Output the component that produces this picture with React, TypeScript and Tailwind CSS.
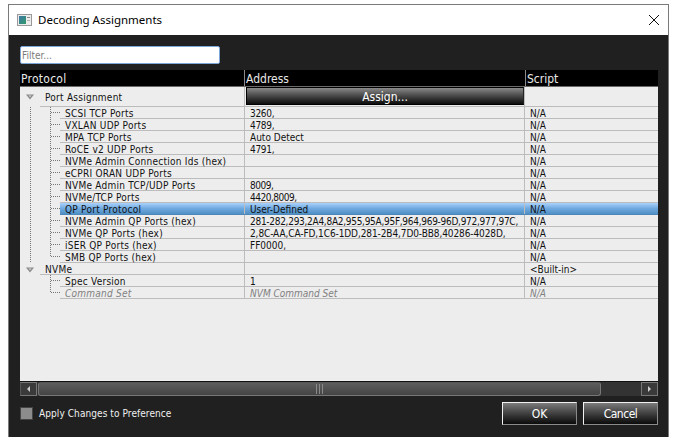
const font = "font-['DejaVu_Sans_Condensed','DejaVu_Sans',sans-serif]";

type Row = { name: string; address: string; script: string; top?: boolean; last?: boolean; open?: boolean; selected?: boolean; disabled?: boolean; tight?: string };

const rows: Row[] = [
  { name: 'SCSI TCP Ports', address: '3260,', script: 'N/A', open: true, tight: 'tracking-[-0.3px]' },
  { name: 'VXLAN UDP Ports', address: '4789,', script: 'N/A', open: true, tight: 'tracking-[-0.3px]' },
  { name: 'MPA TCP Ports', address: 'Auto Detect', script: 'N/A', open: true },
  { name: 'RoCE v2 UDP Ports', address: '4791,', script: 'N/A', open: true, tight: 'tracking-[-0.3px]' },
  { name: 'NVMe Admin Connection Ids (hex)', address: '', script: 'N/A', open: true },
  { name: 'eCPRI ORAN UDP Ports', address: '', script: 'N/A', open: true },
  { name: 'NVMe Admin TCP/UDP Ports', address: '8009,', script: 'N/A', open: true, tight: 'tracking-[-0.5px]' },
  { name: 'NVMe/TCP Ports', address: '4420,8009,', script: 'N/A', open: true, tight: 'tracking-[-0.5px]' },
  { name: 'QP Port Protocol', address: 'User-Defined', script: 'N/A', open: true, selected: true },
  { name: 'NVMe Admin QP Ports (hex)', address: '281-282,293,2A4,8A2,955,95A,95F,964,969-96D,972,977,97C,', script: 'N/A', open: true, tight: 'tracking-[-0.28px]' },
  { name: 'NVMe QP Ports (hex)', address: '2,8C-AA,CA-FD,1C6-1DD,281-2B4,7D0-BB8,40286-4028D,', script: 'N/A', open: true, tight: 'tracking-[-0.1px]' },
  { name: 'iSER QP Ports (hex)', address: 'FF0000,', script: 'N/A', open: true },
  { name: 'SMB QP Ports (hex)', address: '', script: 'N/A', open: true, last: true },
  { name: 'NVMe', address: '', script: '<Built-in>', top: true },
  { name: 'Spec Version', address: '1', script: 'N/A' },
  { name: 'Command Set', address: 'NVM Command Set', script: 'N/A', last: true, disabled: true },
];

const Triangle = () => (
  <svg width="8" height="6" viewBox="0 0 8 6" className="shrink-0">
    <path d="M0 0.5H8L4 5.5Z" fill="#8a8a8a" />
    <path d="M2.5 1.5H5.5L4 3.2Z" fill="#d8d8d8" />
  </svg>
);

// dotted tree guides in the 40px gutter left of a child row
const Guides = ({ row }: { row: Row }) => (
  <svg width="40" height="12" className="shrink-0">
    {row.open && <line x1="10.5" y1="0" x2="10.5" y2="12" stroke="#777" strokeDasharray="1 1" />}
    <line x1="30.5" y1="0" x2="30.5" y2={row.last ? 6 : 12} stroke="#777" strokeDasharray="1 1" />
    <line x1="31" y1="5.5" x2="40" y2="5.5" stroke="#777" strokeDasharray="1 1" />
  </svg>
);

const TreeRow = ({ row }: { row: Row }) => {
  const text = row.disabled ? 'text-[#808080] italic' : 'text-[#111]';
  if (row.top) {
    return (
      <div className={`flex h-[12px] text-[10px] leading-[14px] ${text}`}>
        <div className="w-[20px] flex justify-center items-center pt-[1px]"><Triangle /></div>
        <div className="w-[204px] border-b border-[#bcbcbc] pl-[5px] tracking-[0.25px]">{row.name}</div>
        <div className="w-[280px] border-b border-l border-[#bcbcbc]" />
        <div className="flex-1 border-b border-l border-[#bcbcbc] pl-[5px]">{row.script}</div>
      </div>
    );
  }
  return (
    <div className={`flex h-[12px] text-[10px] leading-[14px] ${text}`}>
      <Guides row={row} />
      <div className={`flex flex-1 border-b ${row.selected ? 'border-[#4d86b8] bg-gradient-to-b from-[#a9d2fb] via-[#6fa9e0] to-[#4f90c4]' : 'border-[#bcbcbc]'}`}>
        <div className="w-[184px] pl-[5px] whitespace-nowrap tracking-[0.25px]">{row.name}</div>
        <div className={`w-[280px] border-l border-[#bcbcbc] pl-[5px] whitespace-nowrap ${row.tight ?? ''}`}>{row.address}</div>
        <div className="flex-1 border-l border-[#bcbcbc] pl-[5px]">{row.script}</div>
      </div>
    </div>
  );
};

const DialogButton = ({ label, className }: { label: string; className?: string }) => (
  <button className={`w-[75px] h-[23px] border border-[#f2f2f2] border-r-[#8a8a8a] border-b-[#8a8a8a] bg-gradient-to-b from-[#7c7c7c] to-[#0c0c0c] text-[12px] text-white ${className ?? ''}`}>
    {label}
  </button>
);

export default function App() {
  return (
    <div className={`w-[675px] h-[441px] bg-white pt-[4px] pl-[8px] overflow-hidden ${font}`}>
      <div className="w-[661px] h-[433px] border border-[#7a7a7a] border-b-0 flex flex-col bg-[#202020]">
        {/* title bar */}
        <div className="h-[30px] bg-white flex items-center pl-[8px] pr-[9px] shrink-0">
          <svg width="15" height="12" viewBox="0 0 15 12" className="shrink-0">
            <defs>
              <linearGradient id="titleIcon" x1="0" y1="0" x2="1" y2="1">
                <stop offset="0" stopColor="#3f78a8" />
                <stop offset="1" stopColor="#2f9a68" />
              </linearGradient>
            </defs>
            <rect x="0.5" y="0.5" width="14" height="11" fill="#ececec" stroke="#9a9a9a" />
            <rect x="2" y="2" width="7" height="8" fill="url(#titleIcon)" />
            <rect x="10" y="3" width="3" height="1" fill="#8a8a8a" />
            <rect x="10" y="6" width="3" height="1" fill="#b0b0b0" />
          </svg>
          <span className="ml-[6px] font-['Noto_Sans',sans-serif] text-[11.5px] text-black">Decoding Assignments</span>
          <svg width="10" height="10" viewBox="0 0 10 10" className="ml-auto shrink-0">
            <path d="M0 0L10 10M10 0L0 10" stroke="#111" strokeWidth="1" />
          </svg>
        </div>

        <div className="flex-1 flex flex-col pl-[11px] pr-[10px]">
          <input
            placeholder="Filter..."
            className="mt-[11px] w-[200px] h-[18px] shrink-0 bg-white border border-[#7aa6d8] rounded-[2px] px-[1px] text-[10px] outline-none placeholder:text-[#7a7a7a]"
          />

          {/* table header */}
          <div className="mt-[6px] h-[17px] shrink-0 flex bg-black text-[12px] leading-[18px] text-[#e8e8e8] w-[638px] border-b border-[#6a6a6a]">
            <div className="w-[224px] pl-[1px] tracking-[0.25px]">Protocol</div>
            <div className="w-[281px] border-l border-[#8a8a8a] pl-[1px]">Address</div>
            <div className="flex-1 border-l border-[#8a8a8a] pl-[1px]">Script</div>
          </div>

          {/* table body */}
          <div className="w-[638px] flex-1 bg-[#ededed] flex flex-col">
            <div className="flex h-[20px] text-[10px] leading-[22px] text-[#111]">
              <div className="w-[20px] flex justify-center items-center"><Triangle /></div>
              <div className="w-[204px] border-b border-[#bcbcbc] pl-[5px] tracking-[0.25px]">Port Assignment</div>
              <div className="w-[280px] border-b border-l border-[#bcbcbc] pl-[1px]">
                <button className="w-[278px] h-[18px] block border border-black border-r-[#222] bg-gradient-to-b from-[#8a8a8a] to-[#0e0e0e] text-[12px] leading-[18px] text-white">
                  Assign...
                </button>
              </div>
              <div className="flex-1 border-b border-l border-[#bcbcbc]" />
            </div>
            {rows.map(row => <TreeRow key={row.name} row={row} />)}
          </div>

          {/* horizontal scrollbar */}
          <div className="w-[638px] h-[15px] shrink-0 flex items-center bg-[#333] border-t border-[#111]">
            <div className="w-[17px] h-[14px] border border-[#777] border-l-[#555] flex items-center justify-center bg-[#3a3a3a]">
              <div className="w-0 h-0 border-y-[3px] border-y-transparent border-r-[3px] border-r-[#ccc]" />
            </div>
            <div className="ml-[1px] w-[563px] h-[14px] rounded-[3px] border border-[#777] border-t-[#555] bg-gradient-to-b from-[#5c5c5c] to-[#444] flex items-center justify-center gap-[2px]">
              <div className="w-[1px] h-[10px] bg-[#8a8a8a]" />
              <div className="w-[1px] h-[10px] bg-[#8a8a8a]" />
              <div className="w-[1px] h-[10px] bg-[#8a8a8a]" />
            </div>
            <div className="ml-auto w-[17px] h-[14px] border border-[#777] flex items-center justify-center bg-[#3a3a3a]">
              <div className="w-0 h-0 border-y-[3px] border-y-transparent border-l-[3px] border-l-[#ccc]" />
            </div>
          </div>

          {/* footer */}
          <div className="h-[41px] pb-[6px] shrink-0 w-[638px] flex items-center">
            <div className="w-[13px] h-[13px] bg-[#8c8c8c] border border-[#444] box-border" />
            <span className="ml-[6px] text-[10px] tracking-[0.08px] text-[#f0f0f0]">Apply Changes to Preference</span>
            <div className="ml-auto flex gap-[6px]">
              <DialogButton label="OK" />
              <DialogButton label="Cancel" className="tracking-[-0.5px]" />
            </div>
          </div>
        </div>
      </div>
    </div>
  );
}
